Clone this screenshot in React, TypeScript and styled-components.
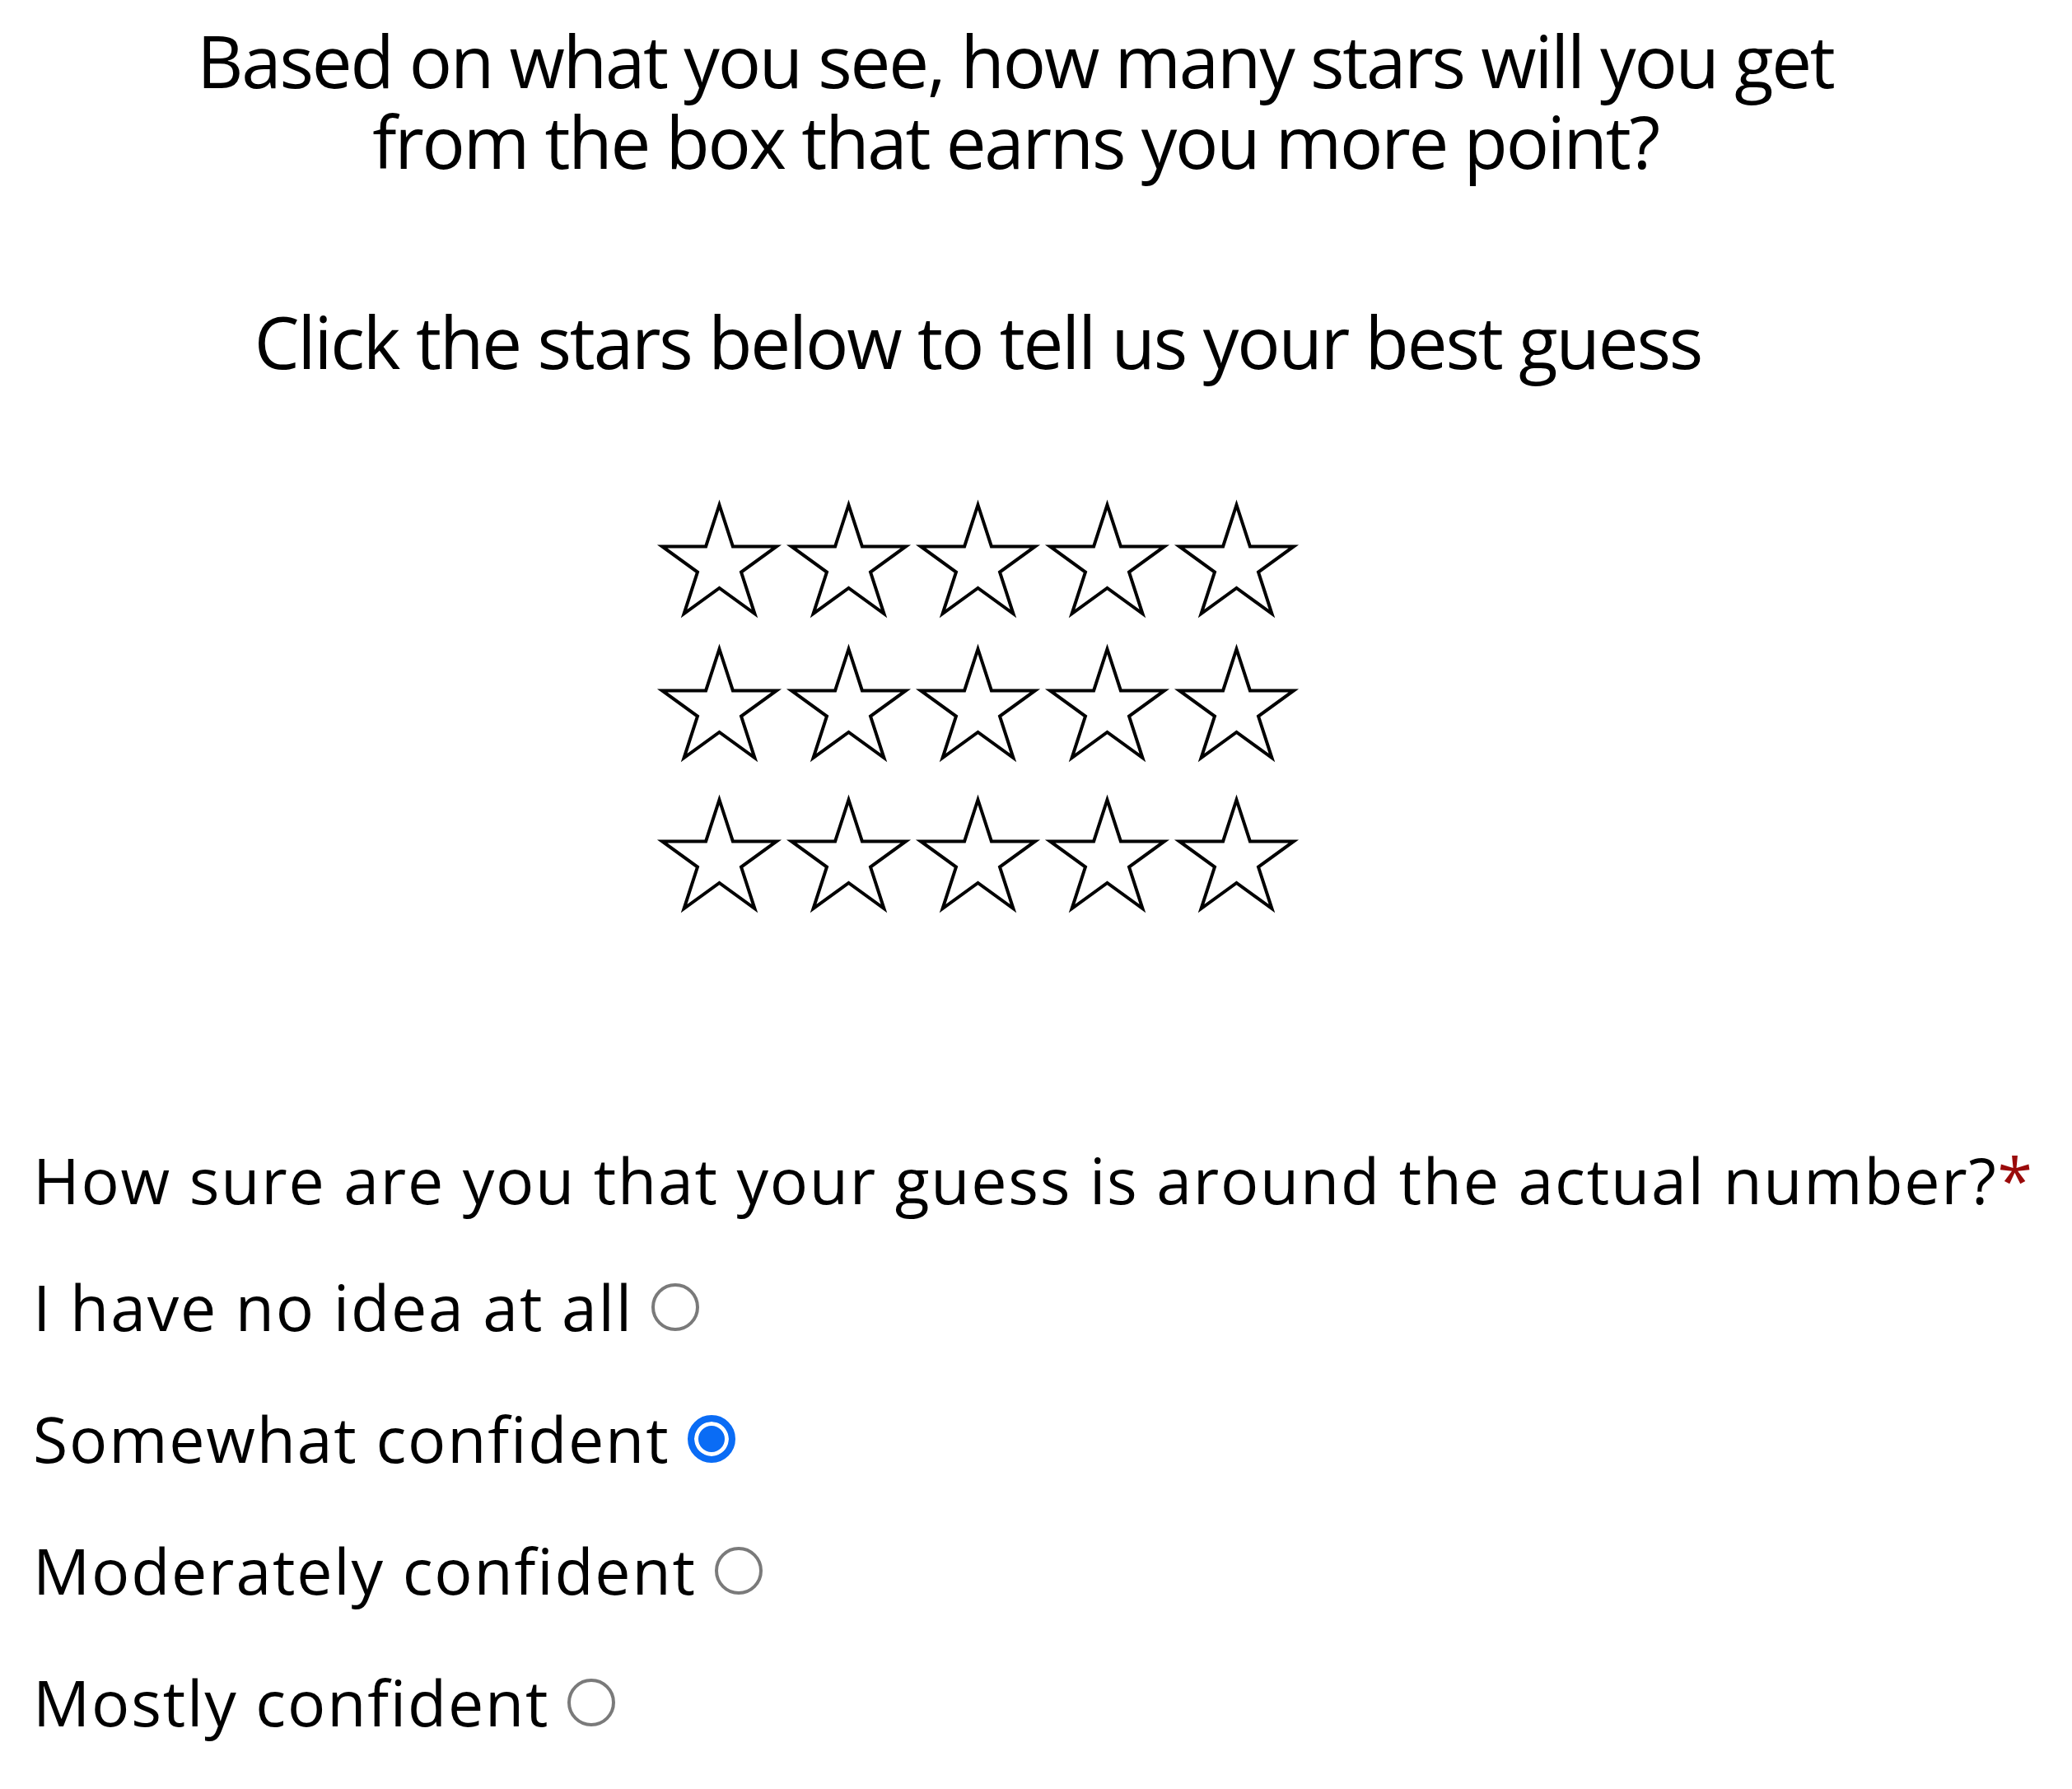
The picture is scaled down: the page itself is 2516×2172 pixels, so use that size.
import React from "react";
import styled, { createGlobalStyle } from "styled-components";

const GlobalStyle = createGlobalStyle`
  html, body {
    margin: 0;
    padding: 0;
    background: #ffffff;
  }
  body {
    font-family: "Open Sans", "Noto Sans", sans-serif;
    color: #000000;
  }
`;

const Page = styled.main`
  width: 2516px;
  display: flex;
  flex-direction: column;
`;

const Prompt = styled.h1`
  margin: 24px 0 0;
  padding-right: 50px;
  font-size: 87px;
  font-weight: 400;
  line-height: 98px;
  letter-spacing: -2.2px;
  text-align: center;
`;

const Instruction = styled.p`
  margin: 145px 0 0;
  padding-right: 141px;
  font-size: 87px;
  line-height: 98px;
  letter-spacing: -2.1px;
  text-align: center;
`;

const StarGrid = styled.div`
  margin-top: 143px;
  padding-right: 141px;
  display: flex;
  flex-direction: column;
  align-items: center;
  gap: 25px;
`;

const StarRow = styled.div<{ $extra?: number }>`
  display: flex;
  margin-top: ${(p) => p.$extra ?? 0}px;
`;

const StarButton = styled.button`
  border: 0;
  padding: 0;
  margin: 0;
  background: transparent;
  width: 157px;
  height: 150px;
  cursor: pointer;
  display: block;
`;

const Question = styled.p`
  margin: 267px 0 0;
  padding-left: 40px;
  font-size: 77px;
  line-height: 104px;
  letter-spacing: 1.75px;
`;

const Required = styled.span`
  color: #9a0a0a;
  letter-spacing: 0;
`;

const OptionList = styled.div`
  margin-top: 50px;
  padding-left: 40px;
  display: flex;
  flex-direction: column;
  gap: 56px;
`;

const Option = styled.label`
  display: flex;
  align-items: baseline;
  font-size: 77px;
  line-height: 104px;
  letter-spacing: 1.8px;
`;

const Radio = styled.span<{ $checked?: boolean }>`
  display: inline-block;
  box-sizing: border-box;
  width: 58px;
  height: 58px;
  margin-left: 22px;
  border-radius: 50%;
  background: ${(p) => (p.$checked ? "#0a6cf5" : "#ffffff")};
  border: ${(p) => (p.$checked ? "8px solid #0a6cf5" : "4px solid #7a7a7a")};
  box-shadow: ${(p) => (p.$checked ? "inset 0 0 0 5px #ffffff" : "none")};
`;

const R = 73;
const r = R * 0.381966;
const cx = 78.5;
const cy = 80;
const starPoints = Array.from({ length: 10 }, (_, i) => {
  const a = ((-90 + i * 36) * Math.PI) / 180;
  const rad = i % 2 === 0 ? R : r;
  return `${(cx + rad * Math.cos(a)).toFixed(2)},${(cy + rad * Math.sin(a)).toFixed(2)}`;
}).join(" ");

const Star = () => (
  <svg width="157" height="150" viewBox="0 0 157 150">
    <polygon
      points={starPoints}
      fill="#ffffff"
      stroke="#000000"
      strokeWidth="4"
      strokeLinejoin="miter"
      strokeMiterlimit="10"
    />
  </svg>
);

const rows = [0, 0, 8];
const options = [
  { label: "I have no idea at all", checked: false },
  { label: "Somewhat confident", checked: true },
  { label: "Moderately confident", checked: false },
  { label: "Mostly confident", checked: false },
];

export default function App() {
  return (
    <>
      <GlobalStyle />
      <Page>
        <Prompt>
          Based on what you see, how many stars will you get
          <br />
          from the box that earns you more point?
        </Prompt>
        <Instruction>Click the stars below to tell us your best guess</Instruction>
        <StarGrid>
          {rows.map((extra, ri) => (
            <StarRow key={ri} $extra={extra}>
              {[0, 1, 2, 3, 4].map((si) => (
                <StarButton key={si} aria-label={`star ${ri * 5 + si + 1}`}>
                  <Star />
                </StarButton>
              ))}
            </StarRow>
          ))}
        </StarGrid>
        <Question>
          How sure are you that your guess is around the actual number?
          <Required>*</Required>
        </Question>
        <OptionList>
          {options.map((o) => (
            <Option key={o.label}>
              {o.label}
              <Radio $checked={o.checked} />
            </Option>
          ))}
        </OptionList>
      </Page>
    </>
  );
}
